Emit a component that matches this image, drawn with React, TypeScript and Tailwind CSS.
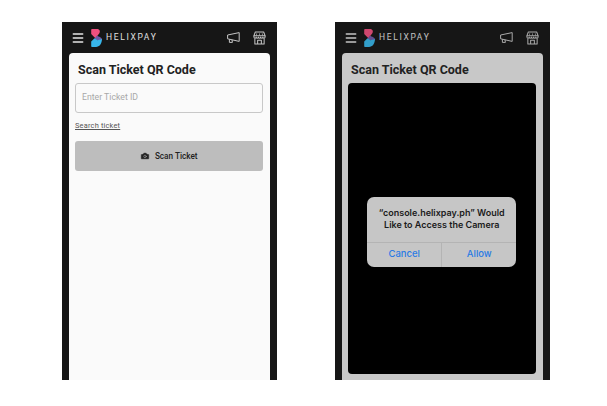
import React from "react";
import { Camera, Menu } from "lucide-react";

const Logo = () => (
  <svg width="11" height="18" viewBox="0 0 11 18" className="shrink-0">
    <path d="M.2 .8 C.2 .3 .5 0 1 0 L6 0 C8.8 0 9.6 2.6 8.2 4.4 L6.6 6.4 L4.6 9.4 L.2 5 Z" fill="#f0507f" />
    <path d="M5.8 6.8 C8 7.6 11 9 11 10.4 L6 11.6 L3.6 9.6 Z" fill="#6f5aa8" />
    <path d="M.2 12.4 L3.6 9.2 L6.4 11.2 L11 10 C11 14.4 8.4 18 5 18 L1 18 C.5 18 .2 17.7 .2 17.2 Z" fill="#38b6ea" />
  </svg>
);

const Megaphone = () => (
  <svg width="13" height="11" viewBox="0 0 13 11" fill="none" stroke="#c4c4c4" strokeWidth="1" strokeLinejoin="round">
    <path d="M.6 3 L12.2 .6 V9.4 L.6 6.8 Z" />
    <path d="M2.4 7.2 V10.4 H5.4 L5 7.8" />
  </svg>
);

const Shop = () => (
  <svg width="13" height="14" viewBox="0 0 14 15" fill="none" stroke="#c4c4c4" strokeWidth="1.1" strokeLinejoin="round">
    <path d="M2.5 1 H11.5 L13 5 H1 Z" />
    <path d="M1 5 V6.5 C1 8.2 3.4 8.2 3.4 6.5 C3.4 8.2 5.8 8.2 5.8 6.5 C5.8 8.2 8.2 8.2 8.2 6.5 C8.2 8.2 10.6 8.2 10.6 6.5 C10.6 8.2 13 8.2 13 6.5 V5" />
    <path d="M2 8 V14 H12 V8 M5 14 V10 H9 V14" />
    <path d="M4 2.5 L3.6 5 M7 2.5 V5 M10 2.5 L10.4 5" strokeWidth=".7" />
  </svg>
);

const Phone = ({ dim, children }: { dim?: boolean; children: React.ReactNode }) => (
  <div className="flex h-[358px] w-[214.5px] flex-col bg-[#161616] px-[7px]">
    <header className={dim ? "flex h-[31px] shrink-0 items-center opacity-85" : "flex h-[31px] shrink-0 items-center"}>
      <Menu size={14} color="#e5e5e5" strokeWidth={2.6} className="ml-[2px]" />
      <div className="ml-[6px] flex items-center gap-[4px]">
        <Logo />
        <span className="text-[8.5px] tracking-[1.65px] text-[#e0e0e0]">HELIXPAY</span>
      </div>
      <div className="ml-auto mr-[4px] flex items-center gap-[13px]">
        <Megaphone />
        <Shop />
      </div>
    </header>
    {children}
  </div>
);

export default function App() {
  return (
    <div className="flex h-[406px] w-[607px] gap-[58.5px] overflow-hidden bg-white pl-[62px] pt-[22px] font-['Roboto',sans-serif]">
      <Phone>
        <main className="flex flex-1 flex-col rounded-t-[4px] bg-[#fafafa] pl-[6px] pr-[7px]">
          <h1 className="ml-[3px] mt-[9px] text-[12.5px] leading-[16px] font-bold text-[#222]">Scan Ticket QR Code</h1>
          <div className="mt-[5px] flex h-[30px] items-center rounded-[3px] border border-[#c8c8c8] px-[6px] text-[8.7px] text-[#a8a8a8]">
            Enter Ticket ID
          </div>
          <a className="mt-[8px] self-start text-[7.4px] leading-[10px] tracking-[.2px] text-[#555] underline">Search ticket</a>
          <button className="mt-[10px] flex h-[30px] items-center justify-center gap-[5px] rounded-[3px] bg-[#bdbdbd] text-[8.2px] font-medium text-[#222]">
            <Camera size={10} fill="#222" color="#bdbdbd" strokeWidth={1.2} />
            Scan Ticket
          </button>
        </main>
      </Phone>
      <Phone dim>
        <main className="flex flex-1 flex-col rounded-t-[4px] bg-[#c8c8c8] pl-[6px] pr-[7px] pb-[6px]">
          <h1 className="ml-[3px] mt-[9px] text-[12.5px] leading-[16px] font-bold text-[#222]">Scan Ticket QR Code</h1>
          <div className="mt-[5px] flex flex-1 items-center justify-center rounded-[4px] bg-black">
            <div className="mt-[6px] w-[149px] rounded-[7px] bg-[#c6c6c6]">
              <p className="px-[8px] pt-[10px] pb-[10px] text-center font-['Inter',sans-serif] text-[9px] leading-[12.5px] font-semibold text-[#1b1b1b]">
                “console.helixpay.ph” Would Like to Access the Camera
              </p>
              <div className="flex h-[25px] border-t border-[#b4b4b4] font-['Inter',sans-serif] text-[9.5px] font-medium text-[#2a7be4]">
                <span className="flex flex-1 items-center justify-center border-r border-[#b4b4b4]">Cancel</span>
                <span className="flex flex-1 items-center justify-center">Allow</span>
              </div>
            </div>
          </div>
        </main>
      </Phone>
    </div>
  );
}
